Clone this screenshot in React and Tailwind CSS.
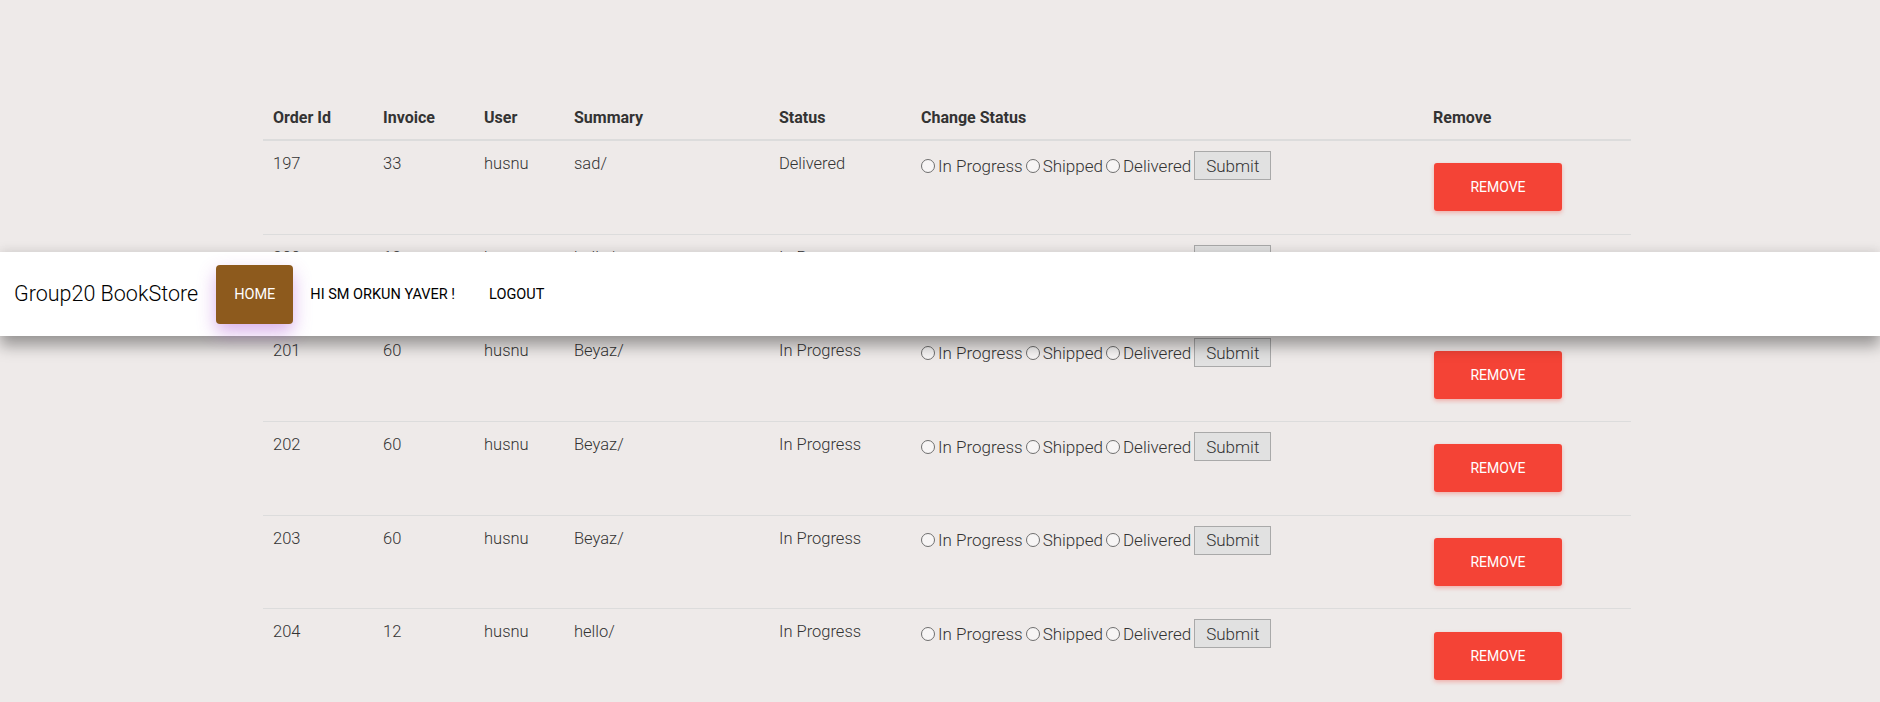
import React from 'react';

const orders = [
    { id: 197, invoice: 33, user: 'husnu', summary: 'sad/', status: 'Delivered' },
    { id: 200, invoice: 12, user: 'husnu', summary: 'hello/', status: 'In Progress' },
    { id: 201, invoice: 60, user: 'husnu', summary: 'Beyaz/', status: 'In Progress' },
    { id: 202, invoice: 60, user: 'husnu', summary: 'Beyaz/', status: 'In Progress' },
    { id: 203, invoice: 60, user: 'husnu', summary: 'Beyaz/', status: 'In Progress' },
    { id: 204, invoice: 12, user: 'husnu', summary: 'hello/', status: 'In Progress' },
];

// column widths, left edge of the table is at 263px
const cols = ['w-[110px]', 'w-[101px]', 'w-[90px]', 'w-[205px]', 'w-[142px]', 'w-[512px]', 'w-[208px]'];

const Radio = ({ label }) => (
    <label className="flex items-center">
        <span className="w-[14px] h-[14px] rounded-full border border-[#6f6f6f] bg-[#f7f5f5] mr-[3px]" />
        <span className="mr-[3px]">{label}</span>
    </label>
);

const Navbar = () => (
    <nav className="absolute top-[252px] left-0 w-full h-[84px] bg-white z-10 flex items-center pt-[1px] shadow-[0_10px_14px_rgba(0,0,0,0.35),0_-3px_10px_rgba(0,0,0,0.07)]">
        <span className="ml-[14px] mr-[18px] text-[21.5px] font-light text-black">Group20 BookStore</span>
        <ul className="flex items-center text-[14.5px] uppercase text-black">
            <li>
                <a className="flex items-center h-[59px] px-[18px] rounded-[4px] bg-[#8d5a1d] text-white shadow-[0_8px_18px_rgba(170,80,210,0.45)]">
                    Home
                </a>
            </li>
            <li>
                <a className="flex items-center h-[59px] px-[17px]">Hi sm orkun yaver !</a>
            </li>
            <li>
                <a className="flex items-center h-[59px] px-[17px]">Logout</a>
            </li>
        </ul>
    </nav>
);

const App = () => {
    return (
        <div className="relative h-screen bg-[#eeeae9] font-['Roboto',sans-serif] text-[#333] overflow-hidden">
            <Navbar />

            <div className="pt-[97px] ml-[263px] w-[1368px]">
                {/* header */}
                <div className="flex h-[44px] items-center border-b-2 border-[#dcdcdc] text-[16px] font-bold text-[#333]">
                    {['Order Id', 'Invoice', 'User', 'Summary', 'Status', 'Change Status', 'Remove'].map((h, i) => (
                        <div key={h} className={`${cols[i]} pl-[10px]`}>{h}</div>
                    ))}
                </div>

                {/* rows */}
                {orders.map((o) => (
                    <div key={o.id} className="flex h-[93.7px] border-b border-[#dcdcdc] text-[16.5px] font-light leading-[24px]">
                        <div className={`${cols[0]} pl-[10px] pt-[11px]`}>{o.id}</div>
                        <div className={`${cols[1]} pl-[10px] pt-[11px]`}>{o.invoice}</div>
                        <div className={`${cols[2]} pl-[10px] pt-[11px]`}>{o.user}</div>
                        <div className={`${cols[3]} pl-[10px] pt-[11px]`}>{o.summary}</div>
                        <div className={`${cols[4]} pl-[10px] pt-[11px]`}>{o.status}</div>
                        <div className={`${cols[5]} pl-[10px] pt-[10px]`}>
                            <form className="flex items-center text-[17px]">
                                <Radio label="In Progress" />
                                <Radio label="Shipped" />
                                <Radio label="Delivered" />
                                <button
                                    type="button"
                                    className="h-[29px] px-[11px] border border-[#a9a9a9] bg-[#e1e1e1] text-[17px] font-light text-[#333]"
                                >
                                    Submit
                                </button>
                            </form>
                        </div>
                        <div className={`${cols[6]} pl-[11px] flex items-center`}>
                            <button
                                type="button"
                                className="w-[128px] h-[48px] rounded-[3px] bg-[#f44336] text-white text-[14px] font-normal uppercase shadow-[0_2px_4px_rgba(244,67,54,0.35)]"
                            >
                                Remove
                            </button>
                        </div>
                    </div>
                ))}
            </div>
        </div>
    );
};

export default App;
